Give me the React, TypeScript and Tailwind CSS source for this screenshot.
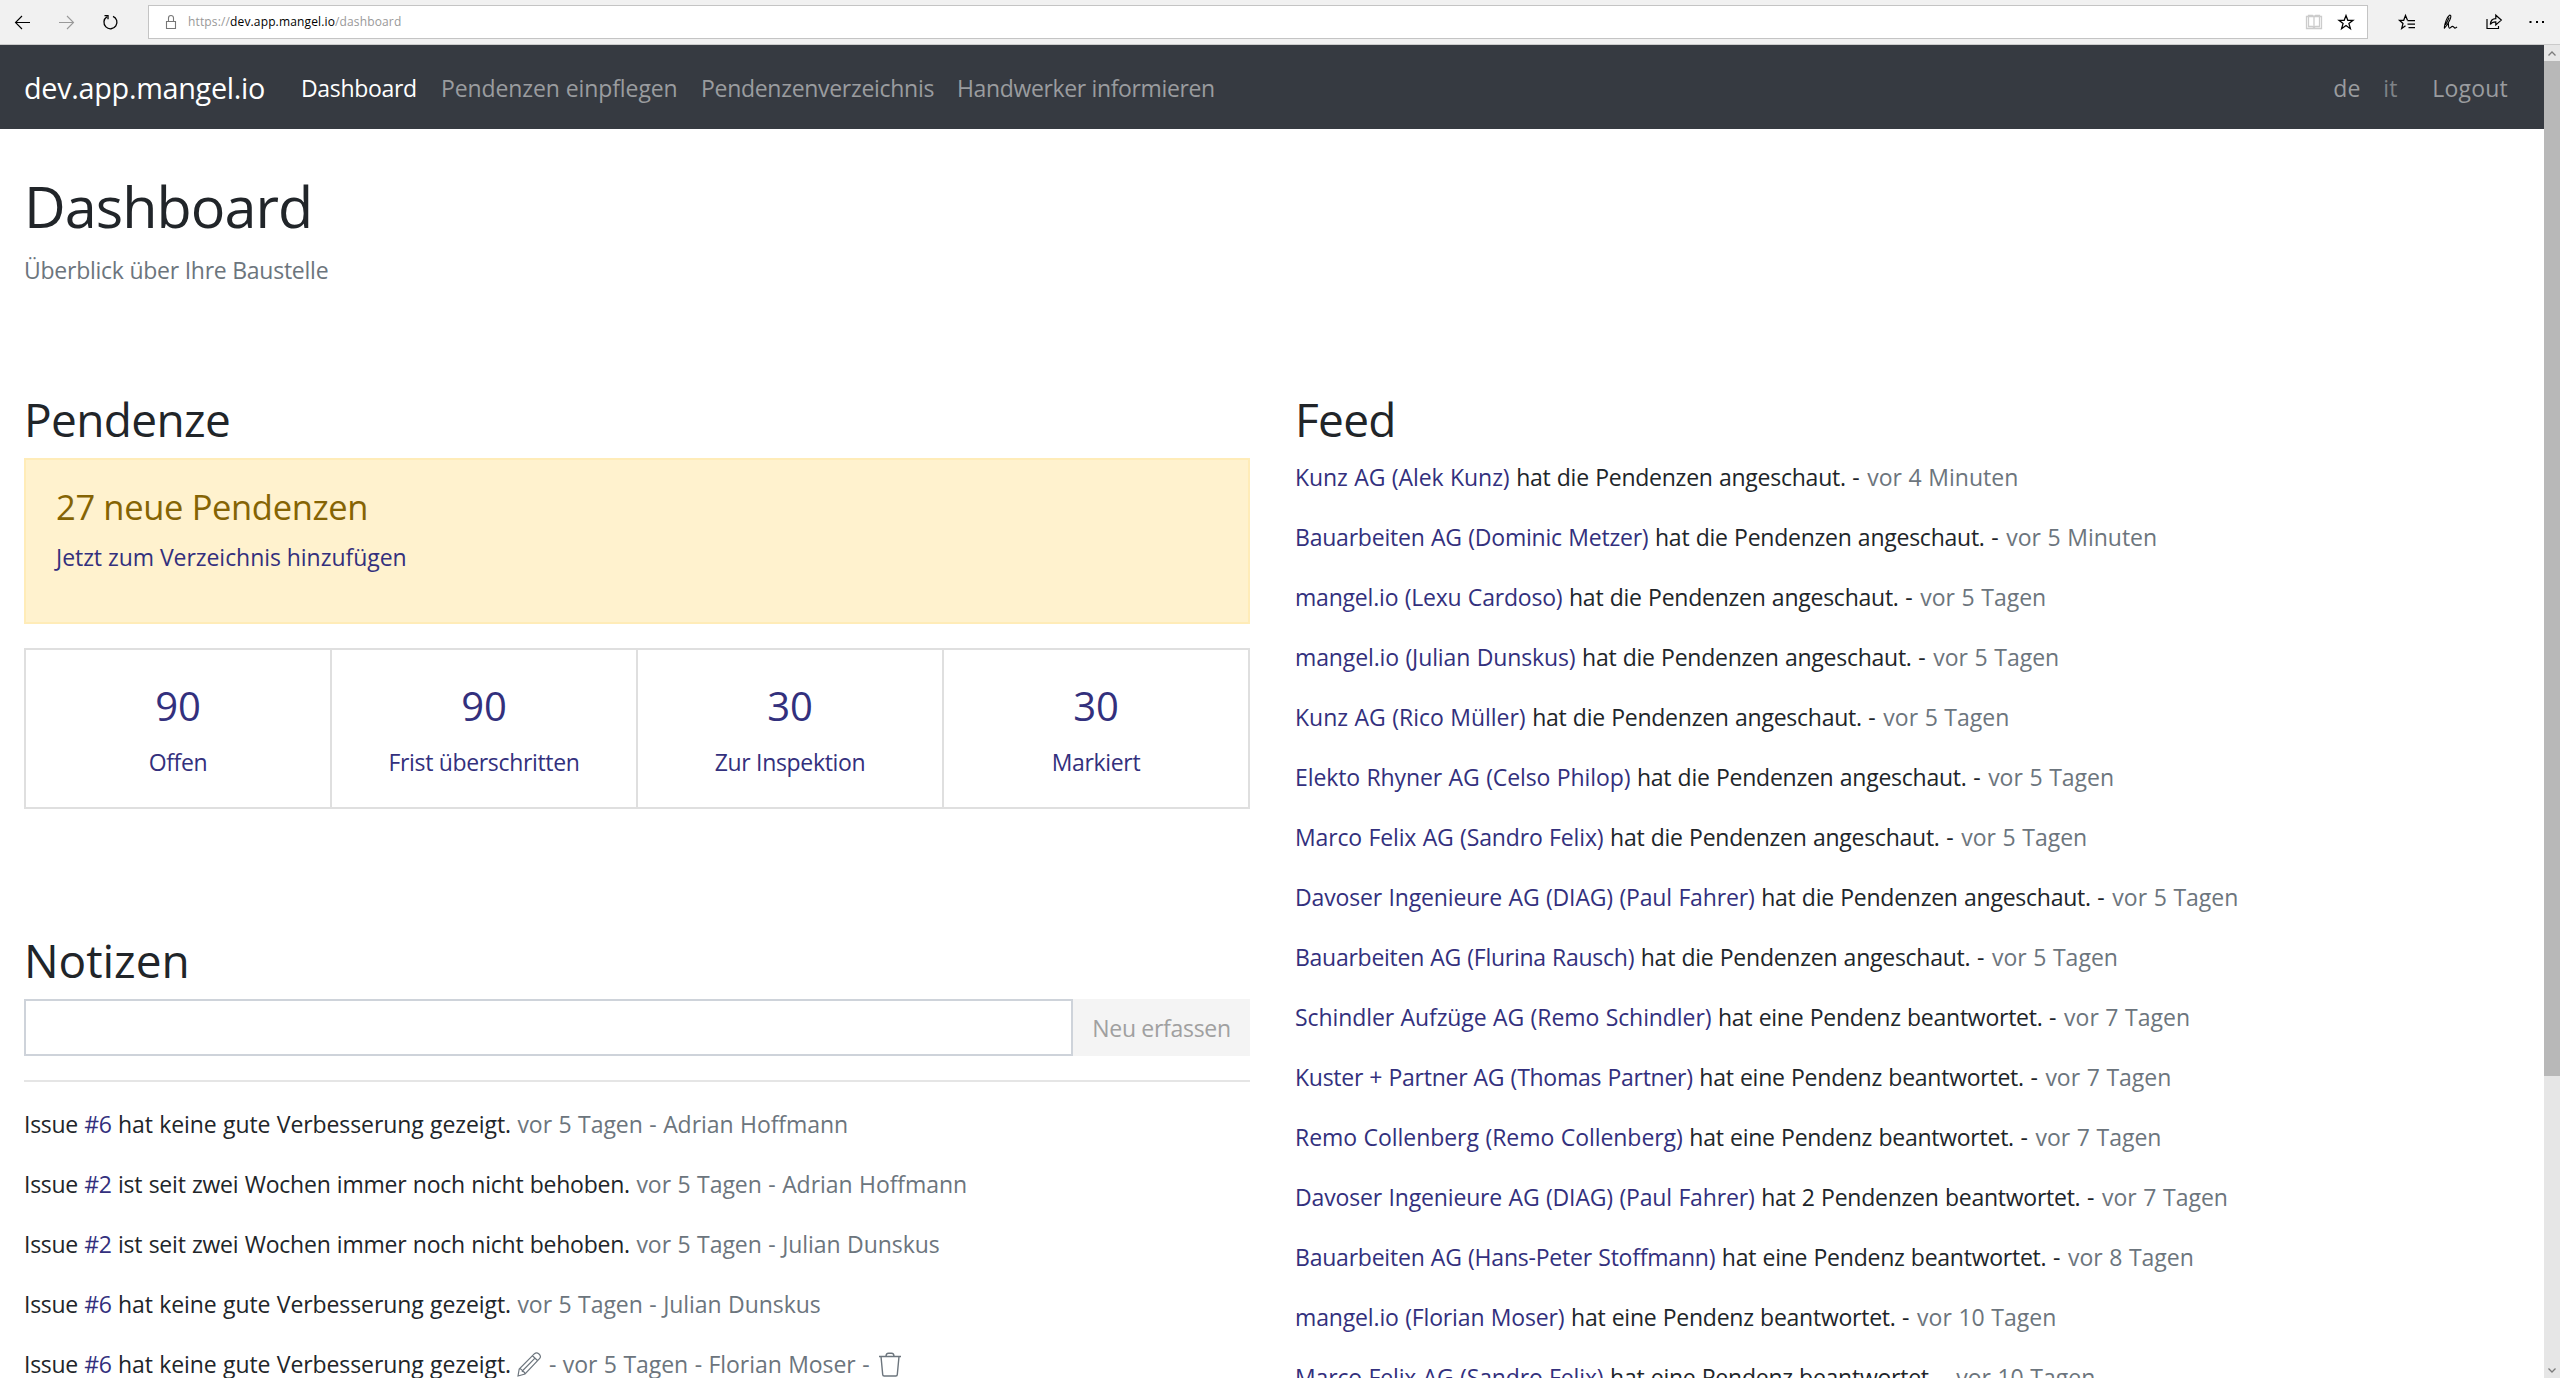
import React from "react";

const PENDING = "hat die Pendenzen angeschaut.";
const ANSWERED = "hat eine Pendenz beantwortet.";

const FEED: [string, string, string, string][] = [
  ["Kunz AG (Alek Kunz)", PENDING, "vor 4 Minuten", "tracking-[-0.08px]"],
  ["Bauarbeiten AG (Dominic Metzer)", PENDING, "vor 5 Minuten", "tracking-[-0.21px]"],
  ["mangel.io (Lexu Cardoso)", PENDING, "vor 5 Tagen", "tracking-[-0.2px]"],
  ["mangel.io (Julian Dunskus)", PENDING, "vor 5 Tagen", "tracking-[-0.12px]"],
  ["Kunz AG (Rico Müller)", PENDING, "vor 5 Tagen", "tracking-[-0.03px]"],
  ["Elekto Rhyner AG (Celso Philop)", PENDING, "vor 5 Tagen", "tracking-[-0.1px]"],
  ["Marco Felix AG (Sandro Felix)", PENDING, "vor 5 Tagen", "tracking-[-0.14px]"],
  ["Davoser Ingenieure AG (DIAG) (Paul Fahrer)", PENDING, "vor 5 Tagen", "tracking-[-0.15px]"],
  ["Bauarbeiten AG (Flurina Rausch)", PENDING, "vor 5 Tagen", "tracking-[-0.27px]"],
  ["Schindler Aufzüge AG (Remo Schindler)", ANSWERED, "vor 7 Tagen", "tracking-[-0.09px]"],
  ["Kuster + Partner AG (Thomas Partner)", ANSWERED, "vor 7 Tagen", "tracking-[-0.27px]"],
  ["Remo Collenberg (Remo Collenberg)", ANSWERED, "vor 7 Tagen", "tracking-[-0.05px]"],
  ["Davoser Ingenieure AG (DIAG) (Paul Fahrer)", "hat 2 Pendenzen beantwortet.", "vor 7 Tagen", "tracking-[-0.15px]"],
  ["Bauarbeiten AG (Hans-Peter Stoffmann)", ANSWERED, "vor 8 Tagen", "tracking-[-0.22px]"],
  ["mangel.io (Florian Moser)", ANSWERED, "vor 10 Tagen", "tracking-[-0.15px]"],
  ["Marco Felix AG (Sandro Felix)", ANSWERED, "vor 10 Tagen", "tracking-[-0.14px]"],
];

const STATS: [string, string][] = [
  ["90", "Offen"],
  ["90", "Frist überschritten"],
  ["30", "Zur Inspektion"],
  ["30", "Markiert"],
];

const BETTER = "hat keine gute Verbesserung gezeigt.";
const WEEKS = "ist seit zwei Wochen immer noch nicht behoben.";

const NOTES: [string, string, string, boolean][] = [
  ["#6", BETTER, "Adrian Hoffmann", false],
  ["#2", WEEKS, "Adrian Hoffmann", false],
  ["#2", WEEKS, "Julian Dunskus", false],
  ["#6", BETTER, "Julian Dunskus", false],
  ["#6", BETTER, "Florian Moser", true],
];

function Icon({ className, children }: { className: string; children: React.ReactNode }) {
  return (
    <svg viewBox="0 0 16 16" className={`h-4 w-4 shrink-0 overflow-visible fill-none stroke-current ${className}`} strokeWidth="1.1">
      {children}
    </svg>
  );
}

function BrowserBar() {
  return (
    <div className="flex h-[45px] shrink-0 items-start border-b border-[#cbcbcb] bg-[#f1f1f1] pt-[5px] text-black">
      <div className="flex h-[34px] w-[148px] items-center gap-7 pl-[15px]">
        <Icon className=""><path d="M15 8.500H.5M7 2 .5 8.500 7 15" /></Icon>
        <Icon className="text-[#999]"><path d="M0 8.500h14.500M8 2l6.500 6.500L8 15" /></Icon>
        <Icon className="">
          <path d="M10 2.300a6.500 6.500 0 1 1-6.200.6M1.500 1.600h3.500v3.700" strokeWidth="1.300" />
        </Icon>
      </div>
      <div className="flex h-[34px] w-[2220px] items-center border border-[#c4c4c4] bg-white pr-[13px] pl-[14px]">
        <Icon className="text-[#777]"><path d="M3.500 7.500h9v7h-9zM5.500 7.500V4a2.500 2.500 0 0 1 5 0v3.500" /></Icon>
        <span className="ml-[9px] text-xs tracking-[0.14px] text-[#999]">
          https://<span className="text-black">dev.app.mangel.io</span>/dashboard
        </span>
        <div className="ml-auto flex gap-4">
          <Icon className="text-[#cccccc]">
            <path d="M.5 2.500h15v12H.5zM2.500 1.500h4L8 2.500l1.500-1h4v11h-4L8 13.500l-1.500-1h-4zM8 2.500v12" strokeWidth="1.300" />
          </Icon>
          <Icon className=""><path d="m8 1.500 1.800 4.800h5.200l-4.100 3.200 1.500 5.200L8 11.500l-4.400 3.200 1.500-5.200L1 6.300h5.200z" strokeWidth="1.250" /></Icon>
        </div>
      </div>
      <div className="flex h-[34px] items-center gap-[27.500px] pl-[30.500px]">
        <Icon className="">
          <path d="M8.500 6.300 6.500 1.500 4.700 6.300H.5l3.500 3.200-1.300 5 3.800-2.800M8.500 6.500H16M8.500 10H16M9.500 13.500H16" strokeWidth="1.250" />
        </Icon>
        <Icon className="">
          <path d="M2.300 13.500C2.800 9 5 3 7.500 1.200c1.800-.6 1.700 2 .3 4.800C6.500 9 4.300 12.500 2 14.500M7.200 3.500 3.500 11M6.300 8.500c.5 2.500-.3 5 .9 5.600 1.200.4 2-1.900 3.500-1.700 1.400.2 1.300 1.700 2.300 1.700s1.500-.7 2-1.200" />
        </Icon>
        <Icon className="">
          <path d="M1 5v9.500h11.500V12M4.300 10.500c.3-3.500 2.500-5.800 5.500-5.800V1.200l5.500 4.900-5.500 4.900V7.800c-2.500 0-4.300.7-5.500 2.700z" strokeWidth="1.200" />
        </Icon>
        <Icon className=""><path d="M.5 7h2v2h-2zM7 7h2v2H7zM13 7h2v2h-2z" fill="currentColor" stroke="none" /></Icon>
      </div>
    </div>
  );
}

function Scrollbar() {
  return (
    <div className="flex w-4 shrink-0 flex-col bg-[#e6e6e6] text-[#7b7b7b]">
      <div className="flex h-4 items-center justify-center">
        <svg viewBox="0 0 8 5" className="h-[5px] w-2 fill-none stroke-current" strokeWidth="1.300"><path d="M.5 4.500 4 1l3.500 3.500" /></svg>
      </div>
      <div className="h-[1087px] bg-[#b8b8b8] [max-height:1015px]" />
      <div className="mt-auto flex h-4 items-center justify-center">
        <svg viewBox="0 0 8 5" className="h-[5px] w-2 fill-none stroke-current" strokeWidth="1.300"><path d="M.5.5 4 4 7.500.5" /></svg>
      </div>
    </div>
  );
}

function Navbar() {
  return (
    <nav className="flex h-[84px] items-center bg-[#363a41] pt-0.5 pr-9 pl-6 text-[23px] whitespace-nowrap text-[#9a9c9f]">
      <a className="w-[277px] text-[28.800px] tracking-[-0.3px] text-white">dev.app.mangel.io</a>
      <a className="w-[140px] tracking-[-0.33px] text-white">Dashboard</a>
      <a className="w-[260px] tracking-[-0.1px]">Pendenzen einpflegen</a>
      <a className="w-[256px] tracking-[-0.3px]">Pendenzenverzeichnis</a>
      <a className="tracking-[-0.36px]">Handwerker informieren</a>
      <div className="ml-auto flex">
        <a className="w-[50px]">de</a>
        <a className="w-[49px] text-[#7f8387]">it</a>
        <a className="tracking-[0.2px]">Logout</a>
      </div>
    </nav>
  );
}

function Pencil() {
  return (
    <svg viewBox="0 0 25 25" className="-mt-1 inline h-[25px] w-[25px] fill-none stroke-[#6c757d]" strokeWidth="1.200">
      <path d="M1 24l1.200-7L17.500 1.700c1.500-1.300 3-1 4.500.3s2 3.200.5 4.700L8 22zM2.200 17c1.800-.3 2.900.5 3.100 2.300 1.800.1 2.600 1.200 2.700 2.700M15.500 3.700l5.200 5M17.500 6.700 5.300 19" />
    </svg>
  );
}

function Trash() {
  return (
    <svg viewBox="0 0 22 25" className="-mt-1 ml-[3px] inline h-[25px] w-[22px] fill-none stroke-[#6c757d]" strokeWidth="1.400">
      <path d="M0 4.500h22M2 4.500l1.700 18c0 1 .6 1.500 1.500 1.500h11.600c.9 0 1.500-.5 1.500-1.500L20 4.500M7 4.300C7 2 8.300 1.200 9.500 1.200h3C13.700 1.200 15 2 15 4.300" />
    </svg>
  );
}

function Heading({ children }: { children: React.ReactNode }) {
  return <h2 className="text-[46px] leading-[58px]">{children}</h2>;
}

function Pendenzen() {
  return (
    <section>
      <Heading><span className="tracking-[-0.65px]">Pendenze</span></Heading>
      <div className="mt-2.5 h-[166px] border-2 border-[#ffecb8] bg-[#fff2ce] px-[30px] pt-[25px]">
        <p className="text-[34.500px] leading-[43px] tracking-[-0.35px] text-[#856404]">27 neue Pendenzen</p>
        <a className="mt-[11px] block tracking-[-0.05px] text-[#33307d]">Jetzt zum Verzeichnis hinzufügen</a>
      </div>
      <div className="mt-6 flex h-[161px] border-2 border-[#dfdfdf] text-center text-[#33307d]">
        {STATS.map(([n, label]) => (
          <a key={label} className="flex-1 border-r-2 border-[#dfdfdf] pt-[31px] last:border-r-0">
            <p className="text-[40px] leading-[50px] tracking-[-0.2px]">{n}</p>
            <p className="mt-[13px] tracking-[-0.33px]">{label}</p>
          </a>
        ))}
      </div>
    </section>
  );
}

function Notizen() {
  return (
    <section className="mt-[122px]">
      <Heading><span className="tracking-[-0.05px]">Notizen</span></Heading>
      <div className="mt-2.5 flex h-[57px]">
        <input className="w-[1049px] border-2 border-[#ced3da] bg-white px-4 outline-none" />
        <button className="flex-1 bg-[#f4f4f4] pt-px tracking-[-0.3px] text-[#a0a0a0]">Neu erfassen</button>
      </div>
      <div className="mt-6 h-0.5 bg-[#e5e5e5]" />
      <div className="mt-6 flex flex-col gap-6 whitespace-nowrap [word-spacing:0.6px]">
        {NOTES.map(([issue, text, author, own], i) => (
          <p key={i} className="tracking-[-0.06px]">
            <span className="tracking-[-0.28px]">Issue <a className="text-[#33307d]">{issue}</a> </span>
            <span className={text === WEEKS ? "tracking-[-0.23px]" : "tracking-[-0.1px]"}>{text}</span>{" "}
            <span className="text-[#6c757d]">
              {own && <><Pencil /> - </>}vor 5 Tagen - {author}
              {own && <> - <Trash /></>}
            </span>
          </p>
        ))}
      </div>
    </section>
  );
}

function Feed() {
  return (
    <section>
      <Heading><span className="tracking-[-0.7px]">Feed</span></Heading>
      <div className="mt-[11px] flex flex-col gap-6 whitespace-nowrap [word-spacing:0.6px]">
        {FEED.map(([who, what, when, tracking], i) => (
          <p key={i}>
            <a className={`text-[#33307d] ${tracking}`}>{who}</a> <span className="tracking-[-0.25px]">{what}</span> -{" "}
            <span className="ml-px text-[#6c757d]">{when}</span>
          </p>
        ))}
      </div>
    </section>
  );
}

export default function App() {
  return (
    <div className="flex h-[1378px] w-[2560px] flex-col overflow-hidden bg-white font-['Open_Sans','Noto_Sans',sans-serif] text-[#212529]">
      <BrowserBar />
      <div className="flex min-h-0 flex-1">
        <div className="min-w-0 flex-1 overflow-hidden">
          <Navbar />
          <main className="px-6 pt-[41px] text-[23px] leading-9">
            <h1 className="text-[57.500px] leading-[72px] tracking-[-0.95px]">Dashboard</h1>
            <p className="mt-2.5 tracking-[-0.25px] text-[#6c757d]">Überblick über Ihre Baustelle</p>
            <div className="mt-[102px] grid grid-cols-[1226px_1fr] gap-x-[45px]">
              <div>
                <Pendenzen />
                <Notizen />
              </div>
              <Feed />
            </div>
          </main>
        </div>
        <Scrollbar />
      </div>
    </div>
  );
}
